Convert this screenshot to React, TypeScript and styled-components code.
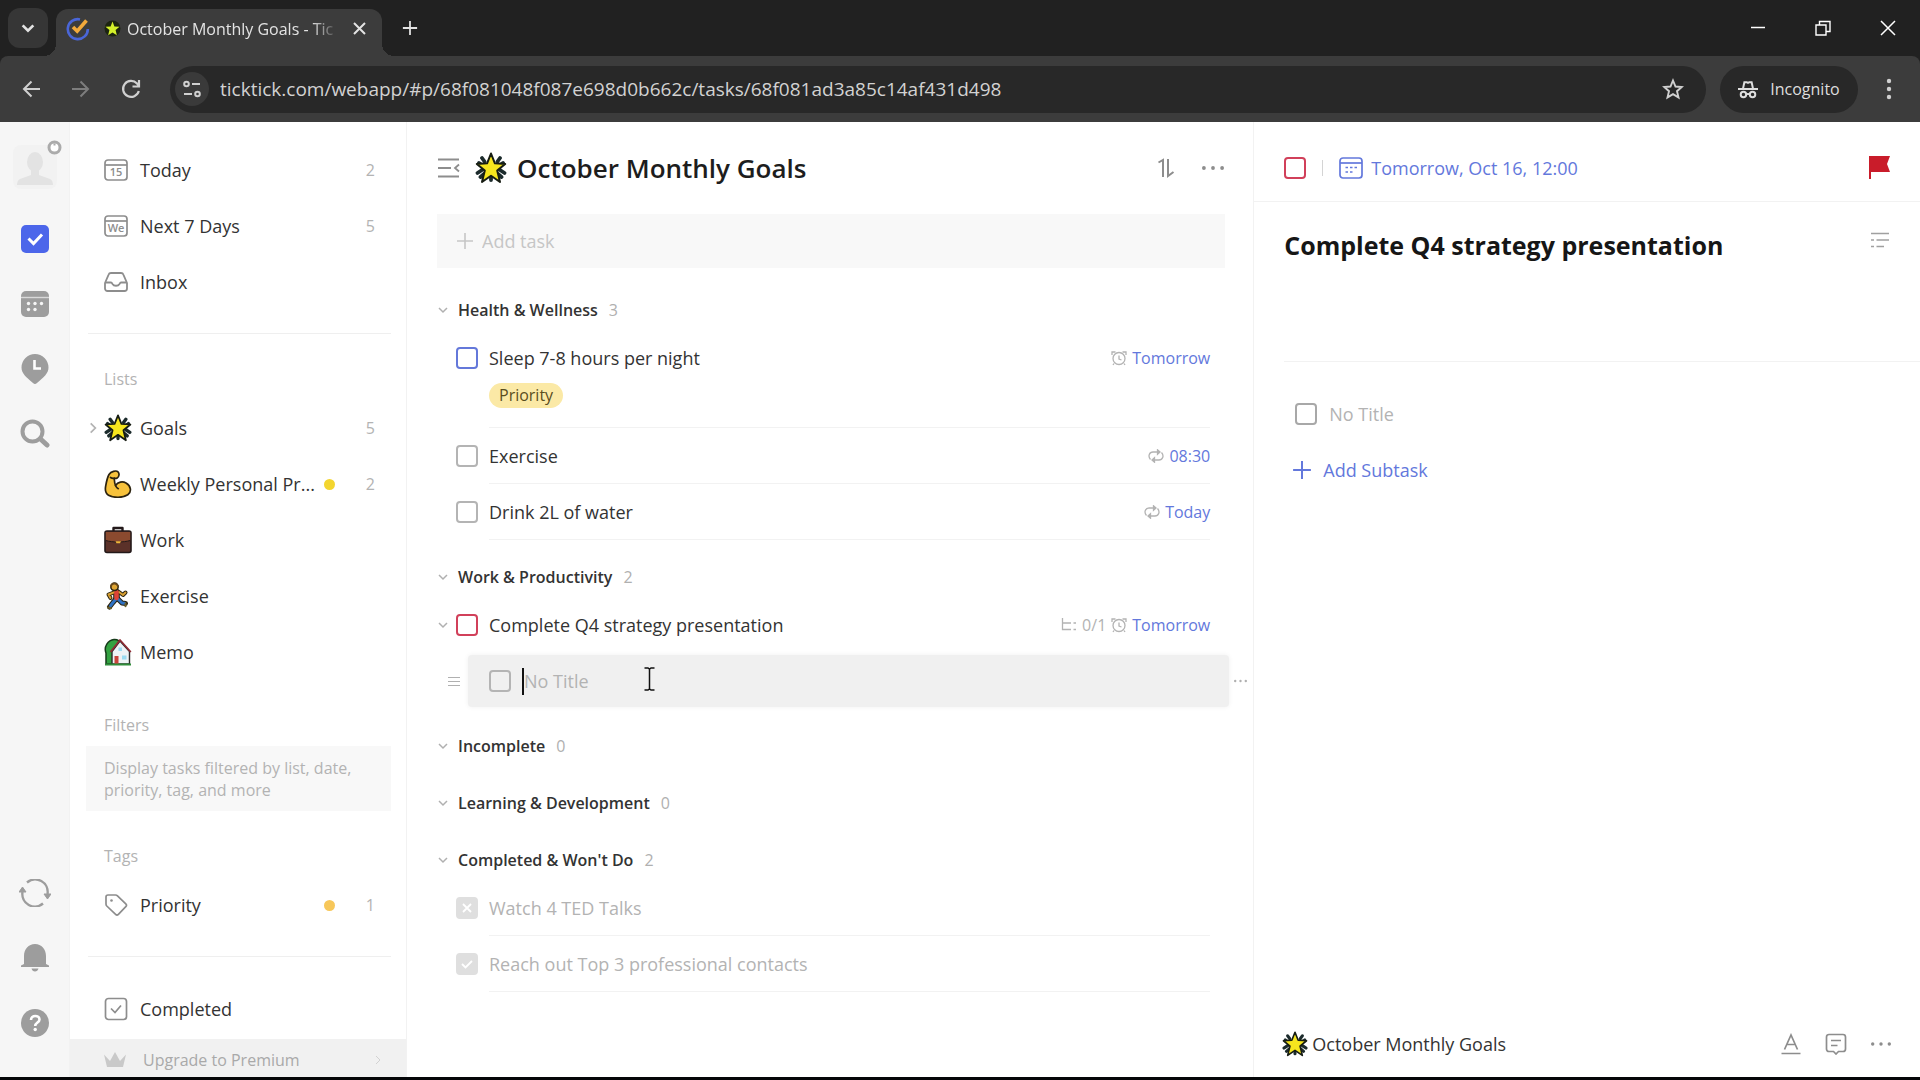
import React from "react";
import styled, { createGlobalStyle } from "styled-components";

const color = {
  text: "#333333",
  strong: "#1d1d1d",
  muted: "#b3b3b3",
  faint: "#c6c6c6",
  icon: "#8d8d8d",
  line: "#f2f2f2",
  blue: "#6378dc",
  red: "#d1405a",
  grey: "#9d9d9d",
};

const GlobalStyle = createGlobalStyle`
  *, *::before, *::after { box-sizing: border-box; }
  html, body { margin: 0; }
  body {
    font-family: "Segoe UI", "Open Sans", "Noto Sans", sans-serif;
    font-size: 18px;
    line-height: 28px;
    color: ${color.text};
    background: #fff;
  }
  h1, h2, h3, p, ul { margin: 0; padding: 0; font-weight: 400; font-size: inherit; }
  ul { list-style: none; }
  button, input { font: inherit; color: inherit; border: 0; padding: 0; margin: 0; background: none; }
  input:focus { outline: none; }
  a { color: inherit; text-decoration: none; }
  svg { display: block; flex: none; }
`;

/* ---------- shell ---------- */

const Shell = styled.div`
  display: flex;
  flex-direction: column;
  height: 100vh;
  overflow: hidden;
  border-bottom: 3px solid #050608;
`;

const Button = styled.button`
  display: flex;
  align-items: center;
  justify-content: center;
  flex: none;
`;

/* ---------- browser ---------- */

const TabStrip = styled.div`
  display: flex;
  flex: none;
  height: 56px;
  padding-left: 8px;
  background: #212121;
  color: #e3e3e3;
`;

const TabSearch = styled(Button)`
  width: 40px;
  height: 40px;
  margin-top: 8px;
  border-radius: 12px;
  background: #363636;
`;

const Tab = styled.div`
  display: flex;
  align-items: center;
  position: relative;
  width: 326px;
  margin: 9px 0 0 8px;
  padding: 0 15px 8px 10px;
  border-radius: 12px 12px 0 0;
  background: #3c3c3c;
  &::before, &::after {
    content: "";
    position: absolute;
    bottom: 0;
    width: 12px;
    height: 12px;
  }
  &::before { left: -12px; background: radial-gradient(circle at 0 0, transparent 12px, #3c3c3c 12px); }
  &::after { right: -12px; background: radial-gradient(circle at 100% 0, transparent 12px, #3c3c3c 12px); }
`;

const TabTitle = styled.span`
  flex: 1;
  margin-left: 6px;
  white-space: nowrap;
  font-size: 16px;
  mask-image: linear-gradient(to right, #000 184px, transparent 212px);
`;

const TabStar = styled.span`
  margin-left: 14px;
`;

const NewTab = styled(Button)`
  width: 32px;
  height: 40px;
  margin: 8px auto 0 12px;
`;

const WindowButton = styled(Button)`
  width: 65px;
  height: 56px;
`;

const ToolbarFrame = styled.div`
  flex: none;
  background: #212121;
`;

const Toolbar = styled.div`
  display: flex;
  align-items: center;
  height: 66px;
  padding: 0 20px 0 6px;
  border-radius: 8px 8px 0 0;
  background: #3c3c3c;
  color: #d0d0d0;
`;

const NavButton = styled(Button)<{ $dim?: boolean }>`
  width: 50px;
  height: 46px;
  color: ${(p) => (p.$dim ? "#7d7d7d" : "#d0d0d0")};
`;

const AddressBar = styled.div`
  display: flex;
  align-items: center;
  flex: 1;
  height: 47px;
  margin-left: 14px;
  padding: 0 22px 0 5px;
  border-radius: 24px;
  background: #282828;
`;

const SiteButton = styled(Button)`
  width: 34px;
  height: 34px;
  border-radius: 50%;
  background: #3a3a3a;
`;

const Address = styled.input`
  flex: 1;
  min-width: 0;
  margin-left: 11px;
  font-size: 19px;
  color: #d2d2d2;
`;

const Incognito = styled(Button)`
  gap: 12px;
  width: 138px;
  height: 47px;
  margin: 0 8px 0 14px;
  border-radius: 24px;
  background: #282828;
  font-size: 16px;
  color: #dedede;
`;

/* ---------- app frame ---------- */

const Workspace = styled.div`
  display: grid;
  grid-template-columns: 70px 337px minmax(0, 56fr) minmax(0, 44fr);
  flex: 1;
  min-height: 0;
`;

const Rail = styled.nav`
  display: flex;
  flex-direction: column;
  align-items: center;
  padding: 23px 0 22px;
  background: #f6f6f6;
  border-right: 1px solid ${color.line};
  color: ${color.grey};
`;

const Avatar = styled(Button)`
  position: relative;
  width: 44px;
  height: 44px;
  margin-bottom: 17px;
  border-radius: 8px;
  background: #f2f2f2;
`;

const Badge = styled.span`
  position: absolute;
  top: -5px;
  right: -5px;
`;

const RailButton = styled(Button)`
  width: 56px;
  height: 65px;
`;

const Spacer = styled.div`
  flex: 1;
`;

/* ---------- sidebar ---------- */

const Sidebar = styled.aside`
  display: flex;
  flex-direction: column;
  min-height: 0;
  padding-top: 20px;
  border-right: 1px solid ${color.line};
`;

const NavRow = styled.a`
  display: flex;
  align-items: center;
  flex: none;
  height: 56px;
  padding: 0 31px 0 16px;
`;

const Expander = styled.span`
  width: 18px;
  color: ${color.muted};
`;

const NavIcon = styled.span`
  display: flex;
  align-items: center;
  width: 26px;
  margin-right: 10px;
  color: ${color.icon};
`;

const NavName = styled.span`
  flex: 1;
  min-width: 0;
  white-space: nowrap;
`;

const Dot = styled.span<{ $fill: string }>`
  width: 11px;
  height: 11px;
  border-radius: 50%;
  background: ${(p) => p.$fill};
`;

const Count = styled.span`
  width: 40px;
  text-align: right;
  font-size: 16px;
  color: ${color.muted};
`;

const Rule = styled.hr`
  flex: none;
  height: 1px;
  margin: 23px 15px 0 18px;
  border: 0;
  background: #efefef;
`;

const Footing = styled.div`
  padding-top: 24px;
`;

const GroupLabel = styled.h2`
  padding: 25px 0 1px 34px;
  font-size: 16px;
  line-height: 40px;
  color: ${color.muted};
`;

const FilterHint = styled.p`
  margin: 0 15px 0 16px;
  padding: 11px 18px 10px;
  background: #f8f8f8;
  font-size: 16px;
  line-height: 22px;
  color: ${color.muted};
`;

const Upgrade = styled.button`
  display: flex;
  align-items: center;
  height: 38px;
  margin-top: auto;
  padding: 4px 22px 0 34px;
  background: #f1f1f1;
  font-size: 16px;
  color: #a9a9a9;
  text-align: left;
  & > span { flex: 1; margin-left: 17px; }
  & > svg:last-child { color: #d2d2d2; }
`;

/* ---------- task list ---------- */

const Main = styled.main`
  min-width: 0;
  padding: 0 28px 0 30px;
  border-right: 1px solid ${color.line};
`;

const ListHeader = styled.header`
  display: flex;
  align-items: center;
  height: 92px;
  color: ${color.icon};
`;

const ListTitle = styled.h1`
  flex: 1;
  margin-left: 10px;
  font-size: 26px;
  line-height: 36px;
  font-weight: 600;
  color: ${color.strong};
`;

const TitleStar = styled.span`
  margin-left: 15px;
`;

const HeaderButton = styled(Button)`
  width: 24px;
  height: 32px;
  margin-left: 23px;
`;

const AddTask = styled.label`
  display: flex;
  align-items: center;
  gap: 8px;
  height: 54px;
  margin-bottom: 22px;
  padding: 0 19px;
  background: #f8f8f8;
  color: ${color.faint};
  input { flex: 1; }
  input::placeholder { color: ${color.faint}; opacity: 1; }
`;

const Section = styled.section`
  margin-bottom: 17px;
`;

const SectionHead = styled.button`
  display: flex;
  align-items: center;
  height: 40px;
  color: #b0b0b0;
`;

const SectionName = styled.span`
  margin: 0 11px 0 9px;
  font-size: 16px;
  font-weight: 600;
  color: ${color.text};
`;

const SectionCount = styled.span`
  font-size: 16px;
`;

const TaskItem = styled.li`
  display: flex;
  padding-right: 15px;
`;

const TaskToggle = styled.span`
  width: 19px;
  padding: 22px 0 0;
  color: #b0b0b0;
`;

const TaskBody = styled.div<{ $line: boolean }>`
  flex: 1;
  min-width: 0;
  margin-left: 11px;
  padding: 14px 0 13px;
  border-bottom: 1px solid ${(p) => (p.$line ? color.line : "transparent")};
`;

const TaskLine = styled.div`
  display: flex;
  align-items: center;
`;

const TaskName = styled.label<{ $done?: boolean }>`
  flex: 1;
  color: ${(p) => (p.$done ? color.muted : color.text)};
`;

const Meta = styled.span`
  display: flex;
  align-items: center;
  gap: 5px;
  font-size: 16px;
  color: ${color.muted};
`;

const DateButton = styled.button`
  color: ${color.blue};
`;

const Tag = styled.span`
  display: inline-block;
  margin: 11px 0 6px;
  padding: 0 10px;
  border-radius: 13px;
  background: #fbe9a6;
  font-size: 16px;
  line-height: 25px;
  vertical-align: top;
  color: #5a4d1e;
`;

const BoxWrap = styled.span`
  display: grid;
  place-items: center;
  flex: none;
  width: 22px;
  height: 22px;
  & > * { grid-area: 1 / 1; }
  & > svg { pointer-events: none; }
`;

const TaskBox = styled(BoxWrap)`
  margin-top: 17px;
`;

const BoxInput = styled.input<{ $tone: string; $filled?: boolean }>`
  appearance: none;
  width: 22px;
  height: 22px;
  border: 2px solid ${(p) => p.$tone};
  border-radius: 4px;
  background: ${(p) => (p.$filled ? p.$tone : "transparent")};
`;

const SubtaskRow = styled.li`
  display: flex;
  align-items: center;
  height: 56px;
  margin-right: -22px;
  padding-left: 11px;
  color: #b0b0b0;
`;

const SubtaskBox = styled.div`
  display: flex;
  align-items: center;
  position: relative;
  flex: 1;
  height: 52px;
  margin: 0 5px 0 8px;
  padding: 0 21px;
  border-radius: 4px;
  background: #f0f0f0;
  box-shadow: 0 0 5px #f0f0f0;
`;

const Caret = styled.span`
  width: 2px;
  height: 27px;
  margin-left: 11px;
  background: #111;
`;

const TitleInput = styled.input`
  flex: 1;
  min-width: 0;
  &::placeholder { color: ${color.muted}; opacity: 1; }
`;

const Pointer = styled.span`
  position: absolute;
  left: 176px;
  top: 12px;
`;

/* ---------- detail ---------- */

const Detail = styled.section`
  display: flex;
  flex-direction: column;
  min-width: 0;
`;

const DetailHead = styled.header`
  display: flex;
  align-items: center;
  height: 80px;
  padding: 12px 29px 0 30px;
  border-bottom: 1px solid ${color.line};
  color: ${color.blue};
`;

const Separator = styled.span`
  width: 1px;
  height: 16px;
  margin: 0 16px 0 16px;
  background: #d4d4d4;
`;

const DueButton = styled.button`
  display: flex;
  align-items: center;
  gap: 8px;
  margin-right: auto;
`;

const DetailTitle = styled.div`
  display: flex;
  align-items: flex-start;
  justify-content: space-between;
  padding: 24px 30px 0;
  color: #a0a0a0;
  h2 {
    font-size: 25px;
    line-height: 38px;
    font-weight: 700;
    color: #161616;
  }
`;

const OutlineButton = styled(Button)`
  height: 28px;
`;

const DetailRule = styled.hr`
  flex: none;
  align-self: stretch;
  height: 1px;
  margin: 97px 0 0 30px;
  border: 0;
  background: ${color.line};
`;

const Subtasks = styled.div`
  flex: 1;
  padding: 24px 30px 0 38px;
`;

const DetailSubtask = styled.div`
  display: flex;
  align-items: center;
  gap: 12px;
  height: 56px;
  padding-left: 3px;
`;

const AddSubtask = styled.button`
  display: flex;
  align-items: center;
  gap: 11px;
  height: 56px;
  color: ${color.blue};
`;

const DetailFoot = styled.footer`
  display: flex;
  align-items: center;
  height: 67px;
  padding: 0 27px 0 28px;
  color: ${color.icon};
`;

const ListLink = styled.a`
  display: flex;
  align-items: center;
  gap: 4px;
  margin-right: auto;
  color: ${color.text};
`;

const FootButton = styled(Button)`
  width: 24px;
  height: 32px;
  margin-left: 21px;
`;

/* ---------- drawings ---------- */

const Chevron = ({ size = 12, turn = 0, width = 1.5 }: { size?: number; turn?: number; width?: number }) => (
  <svg width={size} height={size} viewBox="0 0 12 12" fill="none" stroke="currentColor" strokeWidth={width} transform={`rotate(${turn})`}>
    <path d="M2 4l4 4 4-4" />
  </svg>
);

const Plus = ({ size = 18, width = 1.6 }: { size?: number; width?: number }) => (
  <svg width={size} height={size} viewBox="0 0 18 18" fill="none" stroke="currentColor" strokeWidth={width}>
    <path d="M9 1v16M1 9h16" />
  </svg>
);

const Dots = ({ width = 22, r = 1.9 }: { width?: number; r?: number }) => (
  <svg width={width} height="6" viewBox={`0 0 ${width} 6`} fill="currentColor">
    <circle cx={r} cy="3" r={r} />
    <circle cx={width / 2} cy="3" r={r} />
    <circle cx={width - r} cy="3" r={r} />
  </svg>
);

const Star = ({ size = 28 }: { size?: number }) => (
  <svg width={size} height={size} viewBox="0 0 32 32">
    <g stroke="#1c2b2c" strokeWidth="3.8" strokeLinecap="round">
      <path d="M9.500 9.500L7 6M22.500 9.500L25 6M7 18L2.500 21M25 18L29.500 21M4 11L8 14M28 11l-4 3M16 24v4M5.500 25L9 22M26.500 25L23 22" />
    </g>
    <path
      d="M16 1.500l3.900 9.800 10.300.7-8 6.600 2.800 11.400L16 23.800 7 30l2.800-11.400-8-6.600 10.300-.7z"
      fill="#f6e61e"
      stroke="#161c12"
      strokeWidth="2"
      strokeLinejoin="round"
    />
  </svg>
);

const TabStarIcon = () => (
  <svg width="17" height="17" viewBox="0 0 16 16">
    <circle cx="8" cy="8" r="7.500" fill="#1c2410" />
    <path d="M8 1.500l1.800 4.600 4.800.3-3.700 3.100 1.200 4.800L8 11.700l-4.100 2.600 1.200-4.800-3.700-3.100 4.800-.3z" fill="#d3f02a" />
  </svg>
);

const Muscle = () => (
  <svg width="28" height="28" viewBox="0 0 28 28" fill="#f7c23c" stroke="#2c2310" strokeWidth="1.700" strokeLinejoin="round">
    <path d="M5 4.500C7 1.500 12 0 14 1.800c1.600 1.500 1.300 5-.8 6.200-1.200.7-2.400.4-3 .2.200 2.800.3 5 1.300 7.300 2.500-3.600 7-4.500 10.500-2.500 5.200 3 5.800 9 1.800 11.800-5.300 3.600-14.800 3-19.300.4C.8 23 1 20 1.600 16.500 2.300 12.500 3 8 5 4.500z" />
    <path d="M11.500 15.500c.6 1.500 1.500 2.500 2.800 3.200M6.500 7.500c1.300.8 2.600 1 3.700.7" fill="none" strokeLinecap="round" />
  </svg>
);

const Briefcase = () => (
  <svg width="28" height="28" viewBox="0 0 28 28" stroke="#23191a" strokeWidth="1.600" strokeLinejoin="round">
    <path d="M9.500 5V2h9v3" fill="none" strokeWidth="2.400" />
    <rect x="1" y="5" width="26" height="21.500" rx="2" fill="#5b3129" />
    <path d="M1.800 6h24.400v8.500c-7 2-17.400 2-24.400 0z" fill="#8b4a2f" stroke="none" />
    <path d="M1.800 14.500c7 2 17.400 2 24.400 0" fill="none" strokeWidth="1" />
    <path d="M11.500 15.300h5.500l-1 2h-3.500z" fill="#f0b73a" stroke="none" />
  </svg>
);

const Runner = () => (
  <svg width="26" height="28" viewBox="0 0 26 28" strokeLinecap="round" strokeLinejoin="round" fill="none">
    <g stroke="#2a2412">
      <path d="M11 10L4.500 12.500l2 3.500M15 10l4 3 2.500-2.500" strokeWidth="4" />
      <path d="M12 17l-3 3.500-3.500 4.500M14 17l4 4 3.500.5" strokeWidth="5" />
      <path d="M12.500 10v6.500" strokeWidth="6.600" />
    </g>
    <path d="M11 10L4.500 12.500l2 3.500M15 10l4 3 2.500-2.500" stroke="#d9a032" strokeWidth="2" />
    <path d="M12 17l-3 3.500-2.500 3.300M14 17l4 4 2.500.3" stroke="#2e72c4" strokeWidth="3" />
    <path d="M4 25.500l3 .7M21.500 21.500v2.800" stroke="#6b5f2c" strokeWidth="2" />
    <path d="M12.500 10v6" stroke="#dc4238" strokeWidth="4.600" />
    <circle cx="10.500" cy="4.800" r="3.700" fill="#e0a634" stroke="#2a2412" strokeWidth="1.500" />
    <path d="M7 4.500C7 1.500 12 0 14 4" stroke="#6b4a1c" strokeWidth="1.800" />
  </svg>
);

const House = () => (
  <svg width="28" height="28" viewBox="0 0 28 28" strokeLinejoin="round">
    <path d="M2 26V15C-.5 9 4 2 10 1.500c3.500-.3 6 2 7 4.500L8 26z" fill="#33a241" stroke="#163a1a" strokeWidth="1.500" />
    <path d="M8 13.500l8-10.500 9.500 10.500V26H8z" fill="#edf3f6" stroke="#2b2b2b" strokeWidth="1.400" />
    <path d="M6.500 14L16 2l10.800 12" fill="none" stroke="#8f2c34" strokeWidth="1.800" />
    <rect x="10.500" y="18" width="4" height="8" fill="#c9443c" />
    <path d="M18 17.500h4.500v4H18zM14.500 9.500h3.500v3.500h-3.500z" fill="#9bdcf2" />
    <path d="M1 26.500h26" stroke="#2f8d3a" strokeWidth="2" />
  </svg>
);

const CalendarGlyph = ({ children }: { children: React.ReactNode }) => (
  <svg width="24" height="24" viewBox="0 0 24 24" fill="none" stroke="currentColor" strokeWidth="1.700">
    <rect x="1" y="2" width="22" height="20" rx="3" />
    <path d="M1 7h22" />
    {children}
  </svg>
);

const DayText = styled.text`
  font-size: 11px;
  font-weight: 600;
  fill: currentColor;
  stroke: none;
  text-anchor: middle;
`;

const Inbox = () => (
  <svg width="24" height="24" viewBox="1 0 24 24" fill="none" stroke="currentColor" strokeWidth="1.800" strokeLinejoin="round">
    <path d="M2 13L5.500 4.800C6 3.500 7 3 8 3h10c1 0 2 .5 2.500 1.800L24 13v5.500c0 1.500-1 2.500-2.500 2.500h-17C3 21 2 20 2 18.500z" />
    <path d="M2 12.500h6c.8 0 1 .5 1.500 1.500 1.300 2.300 5.700 2.300 7 0 .5-1 .7-1.500 1.500-1.500h6" />
  </svg>
);

const TagGlyph = () => (
  <svg width="24" height="24" viewBox="0 0 24 24" fill="none" stroke="currentColor" strokeWidth="1.700" strokeLinejoin="round">
    <path d="M2 4c0-1.200.8-2 2-2h7.500c.8 0 1.500.3 2 .8l8.300 8c.8.8.8 2 0 2.800l-7.400 7.700c-.8.8-2 .8-2.800 0L2.800 13c-.5-.5-.8-1.200-.8-2z" />
    <circle cx="7.500" cy="7.500" r="1.300" fill="currentColor" stroke="none" />
  </svg>
);

const CheckSquare = () => (
  <svg width="24" height="24" viewBox="0 0 24 24" fill="none" stroke="currentColor" strokeWidth="1.700">
    <rect x="1.500" y="1.500" width="21" height="21" rx="3" />
    <path d="M7 11.500l4 4 6-7" />
  </svg>
);

const AlarmGlyph = () => (
  <svg width="16" height="15" viewBox="0 0 16 15" fill="none" stroke="currentColor" strokeWidth="1.300">
    <path d="M1 4V1h3.500M11.500 1H15v3M3 12.500L2 14M13 12.500l1 1.500" />
    <circle cx="8" cy="7.500" r="6" />
    <path d="M8 4.500V8l2.500 1" />
  </svg>
);

const RepeatGlyph = () => (
  <svg width="16" height="14" viewBox="0 0 16 14" fill="none" stroke="currentColor" strokeWidth="1.300">
    <path d="M2.500 10.500C-.5 7 1.500 3 5 3h6.500M9.500 .8v4.400L12 3zM13.500 3.500c3 3.500 1 7.500-2.500 7.500H4.500M6.500 8.800v4.400L4 11z" />
  </svg>
);

const SubtaskGlyph = () => (
  <svg width="16" height="14" viewBox="0 0 16 14" fill="none" stroke="currentColor" strokeWidth="1.300">
    <path d="M1.500 0v11.500H10M1.500 5H10M12.500 5H15M12.500 11.500H15" />
  </svg>
);

/* ---------- data ---------- */

type NavEntry = { name: string; icon: React.ReactNode; count?: number; dot?: string; expandable?: boolean };

const smartLists: NavEntry[] = [
  { name: "Today", count: 2, icon: <CalendarGlyph><DayText x="12" y="18">15</DayText></CalendarGlyph> },
  { name: "Next 7 Days", count: 5, icon: <CalendarGlyph><DayText x="12" y="18">We</DayText></CalendarGlyph> },
  { name: "Inbox", icon: <Inbox /> },
];

const lists: NavEntry[] = [
  { name: "Goals", count: 5, icon: <Star />, expandable: true },
  { name: "Weekly Personal Pr...", count: 2, dot: "#f3d52f", icon: <Muscle /> },
  { name: "Work", icon: <Briefcase /> },
  { name: "Exercise", icon: <Runner /> },
  { name: "Memo", icon: <House /> },
];

const NavLine = ({ entry }: { entry: NavEntry }) => (
  <NavRow href="#">
    <Expander>{entry.expandable && <Chevron size={14} turn={-90} />}</Expander>
    <NavIcon>{entry.icon}</NavIcon>
    <NavName>{entry.name}</NavName>
    {entry.dot && <Dot $fill={entry.dot} />}
    <Count>{entry.count}</Count>
  </NavRow>
);

type TaskProps = {
  id: string;
  name: string;
  tone?: string;
  state?: "open" | "done" | "wont";
  open?: boolean;
  line?: boolean;
  tag?: string;
  meta?: React.ReactNode;
  date?: string;
};

const Task = ({ id, name, tone = "#b4b4b4", state = "open", open, line = true, tag, meta, date }: TaskProps) => (
  <TaskItem>
    <TaskToggle>{open && <Chevron />}</TaskToggle>
    <TaskBox>
      <BoxInput
        id={id}
        type="checkbox"
        defaultChecked={state !== "open"}
        $tone={state === "open" ? tone : "#dfdfdf"}
        $filled={state !== "open"}
      />
      {state !== "open" && (
        <svg width="14" height="14" viewBox="0 0 14 14" fill="none" stroke="#fff" strokeWidth="1.800">
          <path d={state === "done" ? "M2 7l3.500 3.500L12 4" : "M3 3l8 8M11 3l-8 8"} />
        </svg>
      )}
    </TaskBox>
    <TaskBody $line={line}>
      <TaskLine>
        <TaskName htmlFor={id} $done={state !== "open"}>{name}</TaskName>
        {date && (
          <Meta>
            {meta}
            <DateButton>{date}</DateButton>
          </Meta>
        )}
      </TaskLine>
      {tag && <Tag>{tag}</Tag>}
    </TaskBody>
  </TaskItem>
);

const Group = ({ name, count, children }: { name: string; count: number; children?: React.ReactNode }) => (
  <Section>
    <SectionHead>
      <Chevron />
      <SectionName>{name}</SectionName>
      <SectionCount>{count}</SectionCount>
    </SectionHead>
    {children && <ul>{children}</ul>}
  </Section>
);

/* ---------- page ---------- */

const Browser = () => (
  <>
    <TabStrip>
      <TabSearch aria-label="Search tabs"><Chevron size={16} width={2} /></TabSearch>
      <Tab>
        <svg width="24" height="24" viewBox="0 0 24 24" fill="none">
          <path d="M14 2.400A10 10 0 1 0 21.800 12" stroke="#4a66d8" strokeWidth="2.600" />
          <path d="M7 10l4.200 4.200L20.500 3.500" stroke="#f2a93b" strokeWidth="3.600" />
        </svg>
        <TabStar><TabStarIcon /></TabStar>
        <TabTitle>October Monthly Goals - Tic</TabTitle>
        <Button aria-label="Close tab">
          <svg width="15" height="15" viewBox="0 0 15 15" stroke="currentColor" strokeWidth="2"><path d="M2 2l11 11M13 2L2 13" /></svg>
        </Button>
      </Tab>
      <NewTab aria-label="New tab"><Plus size={16} width={2} /></NewTab>
      <WindowButton aria-label="Minimize">
        <svg width="16" height="16" viewBox="0 0 16 16" stroke="#fff" strokeWidth="1.500"><path d="M1 7.500h14" /></svg>
      </WindowButton>
      <WindowButton aria-label="Restore">
        <svg width="16" height="16" viewBox="0 0 16 16" fill="none" stroke="#fff" strokeWidth="1.400"><path d="M1 5h10v10H1zM4.500 5V1.500H15v10h-4" /></svg>
      </WindowButton>
      <WindowButton aria-label="Close">
        <svg width="16" height="16" viewBox="0 0 16 16" stroke="#fff" strokeWidth="1.500"><path d="M1 1l14 14M15 1L1 15" /></svg>
      </WindowButton>
    </TabStrip>
    <ToolbarFrame>
      <Toolbar>
        <NavButton aria-label="Back">
          <svg width="18" height="18" viewBox="0 0 18 18" fill="none" stroke="currentColor" strokeWidth="2"><path d="M18 9H2M9.500 1.500L2 9l7.500 7.500" /></svg>
        </NavButton>
        <NavButton aria-label="Forward" $dim>
          <svg width="18" height="18" viewBox="0 0 18 18" fill="none" stroke="currentColor" strokeWidth="2"><path d="M0 9h16M8.500 1.500L16 9l-7.500 7.500" /></svg>
        </NavButton>
        <NavButton aria-label="Reload">
          <svg width="20" height="20" viewBox="0 0 20 20" fill="none" stroke="currentColor" strokeWidth="2.200"><path d="M17.800 12A8 8 0 1 1 16 4.500l1.500 1.800M18 1v6.500h-6.500" /></svg>
        </NavButton>
        <AddressBar>
          <SiteButton aria-label="Site information">
            <svg width="18" height="18" viewBox="0 0 18 18" fill="none" stroke="currentColor" strokeWidth="2">
              <circle cx="3.500" cy="4" r="2.300" /><path d="M9 4h8M1 14h8" /><circle cx="14.500" cy="14" r="2.300" />
            </svg>
          </SiteButton>
          <Address aria-label="Address" defaultValue="ticktick.com/webapp/#p/68f081048f087e698d0b662c/tasks/68f081ad3a85c14af431d498" />
          <Button aria-label="Bookmark">
            <svg width="22" height="22" viewBox="0 0 22 22" fill="none" stroke="currentColor" strokeWidth="1.900">
              <path d="M11 2.500l2.500 6 6.300.5-4.800 4.200 1.500 6.200-5.500-3.300-5.500 3.300L7 13.200 2.200 9l6.300-.5z" />
            </svg>
          </Button>
        </AddressBar>
        <Incognito>
          <svg width="20" height="19" viewBox="0 0 22 20" fill="none" stroke="currentColor" strokeWidth="2.200">
            <path d="M0 9.500h22M5.500 9L7 2h2.500l1.500.8 1.500-.8H15l1.500 7" />
            <circle cx="6" cy="15.500" r="3" /><circle cx="16" cy="15.500" r="3" /><path d="M9 15h4" />
          </svg>
          Incognito
        </Incognito>
        <Button aria-label="Menu">
          <svg width="34" height="22" viewBox="0 0 34 22" fill="currentColor">
            <circle cx="23" cy="3" r="2.200" /><circle cx="23" cy="11" r="2.200" /><circle cx="23" cy="19" r="2.200" />
          </svg>
        </Button>
      </Toolbar>
    </ToolbarFrame>
  </>
);

const AppRail = () => (
  <Rail>
    <Avatar aria-label="Account">
      <svg width="40" height="40" viewBox="0 0 40 40" fill="#e3e3e3">
        <ellipse cx="20" cy="15" rx="8" ry="10" /><path d="M16 22h8v6l11 4c2 1 3 3 3 6H2c0-3 1-5 3-6l11-4z" />
      </svg>
      <Badge>
        <svg width="15" height="15" viewBox="0 0 15 15" fill="#fff" stroke="#ababab" strokeWidth="3">
          <circle cx="7.500" cy="7.500" r="5.500" /><path d="M7.500 3.500v2" strokeWidth="2" />
        </svg>
      </Badge>
    </Avatar>
    <RailButton aria-label="Tasks">
      <svg width="28" height="28" viewBox="0 0 28 28" fill="none"><rect width="28" height="28" rx="5" fill="#4c66ea" /><path d="M7.500 13.500l5 5 8.500-9" stroke="#fff" strokeWidth="3" /></svg>
    </RailButton>
    <RailButton aria-label="Calendar">
      <svg width="28" height="28" viewBox="0 0 28 28">
        <rect y="1" width="28" height="26" rx="5" fill="currentColor" />
        <path d="M0 7.500h28" stroke="#d9d9d9" strokeWidth="1.400" />
        <g fill="#f6f6f6"><circle cx="7.500" cy="13.500" r="1.700" /><circle cx="14" cy="13.500" r="1.700" /><circle cx="20.500" cy="13.500" r="1.700" /><circle cx="7.500" cy="19.500" r="1.700" /><circle cx="14" cy="19.500" r="1.700" /></g>
      </svg>
    </RailButton>
    <RailButton aria-label="Timer">
      <svg width="28" height="30" viewBox="0 0 28 30"><path d="M14 0a13.500 13.500 0 0 1 13.500 13.500c0 6-5 10-11.500 15.500-1.300 1.200-2.700 1.200-4 0C5.500 23.500.5 19.500.5 13.500A13.500 13.500 0 0 1 14 0z" fill="currentColor" /><path d="M13.500 6v8.500H20" fill="none" stroke="#fff" strokeWidth="2.600" /></svg>
    </RailButton>
    <RailButton aria-label="Search">
      <svg width="30" height="30" viewBox="0 0 30 30" fill="none" stroke="currentColor" strokeLinecap="round"><circle cx="12.500" cy="12.500" r="10" strokeWidth="4" /><path d="M20.500 20l6.500 6" strokeWidth="5" /></svg>
    </RailButton>
    <Spacer />
    <RailButton aria-label="Sync">
      <svg width="32" height="28" viewBox="0 0 32 28" fill="none" stroke="currentColor" strokeWidth="2.400">
        <path d="M8 3.500A12.500 12.500 0 0 1 28.500 15M24 24.500A12.500 12.500 0 0 1 3.500 13" />
        <path d="M25 15h7l-3.500 5zM0 13h7L3.500 8z" fill="currentColor" strokeWidth="1" />
      </svg>
    </RailButton>
    <RailButton aria-label="Notifications">
      <svg width="28" height="28" viewBox="0 0 28 28" fill="currentColor"><path d="M3 20V12C3 5 7.500 0 14 0s11 5 11 12v8l3 1.500V23H0v-1.500zM10.500 24.500h7c-.5 2-1.800 3-3.500 3s-3-1-3.500-3z" /></svg>
    </RailButton>
    <RailButton aria-label="Help">
      <svg width="28" height="28" viewBox="0 0 28 28" fill="none"><circle cx="14" cy="14" r="14" fill="currentColor" /><path d="M10 11c0-5.500 8.500-5 8.500-.5 0 3-4.300 3-4.300 6.500" stroke="#fff" strokeWidth="2.600" /><circle cx="14.200" cy="20.500" r="1.700" fill="#fff" /></svg>
    </RailButton>
  </Rail>
);

const ListSidebar = () => (
  <Sidebar>
    {smartLists.map((e) => <NavLine key={e.name} entry={e} />)}
    <Rule />
    <GroupLabel>Lists</GroupLabel>
    {lists.map((e) => <NavLine key={e.name} entry={e} />)}
    <GroupLabel>Filters</GroupLabel>
    <FilterHint>Display tasks filtered by list, date, priority, tag, and more</FilterHint>
    <GroupLabel>Tags</GroupLabel>
    <NavLine entry={{ name: "Priority", count: 1, dot: "#f7c75a", icon: <TagGlyph /> }} />
    <Rule />
    <Footing>
      <NavLine entry={{ name: "Completed", icon: <CheckSquare /> }} />
    </Footing>
    <Upgrade>
      <svg width="22" height="18" viewBox="0 0 22 18" fill="#c9c9c9"><path d="M0 3.500L6 10l5-9 5 9 6-6.500L19 16H3z" /></svg>
      <span>Upgrade to Premium</span>
      <Chevron turn={-90} width={1} />
    </Upgrade>
  </Sidebar>
);

const TaskList = () => (
  <Main>
    <ListHeader>
      <Button aria-label="Collapse sidebar">
        <svg width="23" height="20" viewBox="0 0 23 20" fill="none" stroke="currentColor" strokeWidth="1.800"><path d="M1 1.500h21M1 10h13M1 18.500h21M22 6.500L18 10l4 3.500" /></svg>
      </Button>
      <TitleStar><Star size={32} /></TitleStar>
      <ListTitle>October Monthly Goals</ListTitle>
      <HeaderButton aria-label="Sort">
        <svg width="18" height="20" viewBox="0 0 18 20" fill="none" stroke="currentColor" strokeWidth="2"><path d="M1.500 4.500L6 2v17M11 1v17l5.500-4" /></svg>
      </HeaderButton>
      <HeaderButton aria-label="More"><Dots /></HeaderButton>
    </ListHeader>
    <AddTask>
      <Plus />
      <input aria-label="Add task" placeholder="Add task" />
    </AddTask>
    <Group name="Health & Wellness" count={3}>
      <Task id="sleep" name="Sleep 7-8 hours per night" tone="#6478da" tag="Priority" meta={<AlarmGlyph />} date="Tomorrow" />
      <Task id="exercise" name="Exercise" meta={<RepeatGlyph />} date="08:30" />
      <Task id="water" name="Drink 2L of water" meta={<RepeatGlyph />} date="Today" />
    </Group>
    <Group name="Work & Productivity" count={2}>
      <Task
        id="strategy"
        name="Complete Q4 strategy presentation"
        tone={color.red}
        open
        line={false}
        meta={<><SubtaskGlyph />0/1<AlarmGlyph /></>}
        date="Tomorrow"
      />
      <SubtaskRow>
        <svg width="12" height="11" viewBox="0 0 12 11" stroke="currentColor" strokeWidth="1.200"><path d="M0 1.500h12M0 5.500h12M0 9.500h12" /></svg>
        <SubtaskBox>
          <BoxWrap><BoxInput type="checkbox" aria-label="Complete subtask" $tone="#b4b4b4" /></BoxWrap>
          <Caret />
          <TitleInput aria-label="Subtask title" placeholder="No Title" />
          <Pointer>
            <svg width="11" height="24" viewBox="0 0 11 24" fill="none" stroke="#111" strokeWidth="1.500"><path d="M.5 1H4l1.500 1L7 1h3.500M.5 23H4l1.500-1L7 23h3.500M5.500 2v20" /></svg>
          </Pointer>
        </SubtaskBox>
        <Button aria-label="More"><Dots width={13} r={1.2} /></Button>
      </SubtaskRow>
    </Group>
    <Group name="Incomplete" count={0} />
    <Group name="Learning & Development" count={0} />
    <Group name="Completed & Won't Do" count={2}>
      <Task id="ted" name="Watch 4 TED Talks" state="wont" />
      <Task id="contacts" name="Reach out Top 3 professional contacts" state="done" />
    </Group>
  </Main>
);

const TaskDetail = () => (
  <Detail>
    <DetailHead>
      <BoxWrap><BoxInput type="checkbox" aria-label="Complete task" $tone={color.red} /></BoxWrap>
      <Separator />
      <DueButton>
        <CalendarGlyph><path d="M6.500 11.500H9M11 11.500h2.500M15.500 11.500H18M6.500 16H9M11 16h2.500" /></CalendarGlyph>
        Tomorrow, Oct 16, 12:00
      </DueButton>
      <Button aria-label="Priority">
        <svg width="22" height="24" viewBox="0 0 22 24" fill="#c91c2a"><path d="M0 0h21l-3 8 3 8H2v7H0z" /></svg>
      </Button>
    </DetailHead>
    <DetailTitle>
      <h2>Complete Q4 strategy presentation</h2>
      <OutlineButton aria-label="Outline">
        <svg width="20" height="16" viewBox="0 0 20 16" fill="none" stroke="currentColor" strokeWidth="1.500"><path d="M1 1.500h18M1 8h3M6.500 8H19M1 14.500h3M6.500 14.500H14" /></svg>
      </OutlineButton>
    </DetailTitle>
    <DetailRule />
    <Subtasks>
      <DetailSubtask>
        <BoxWrap><BoxInput type="checkbox" aria-label="Complete subtask" $tone="#a8a8a8" /></BoxWrap>
        <TitleInput aria-label="Subtask title" placeholder="No Title" />
      </DetailSubtask>
      <AddSubtask><Plus size={20} width={1.8} />Add Subtask</AddSubtask>
    </Subtasks>
    <DetailFoot>
      <ListLink href="#"><Star size={26} />October Monthly Goals</ListLink>
      <FootButton aria-label="Text style">
        <svg width="20" height="22" viewBox="0 0 20 22" fill="none" stroke="currentColor" strokeWidth="1.700"><path d="M3.500 16.500L10 2l6.500 14.500M6 11.500h8M.5 20.500h19" /></svg>
      </FootButton>
      <FootButton aria-label="Comments">
        <svg width="22" height="22" viewBox="0 0 22 22" fill="none" stroke="currentColor" strokeWidth="1.700"><path d="M4 1.500h14c1.500 0 2.500 1 2.500 2.500v12c0 1.500-1 2.500-2.500 2.500h-4.500L11 21l-2.500-2.500H4c-1.500 0-2.500-1-2.500-2.500V4c0-1.500 1-2.500 2.500-2.500zM6 7.500h10M6 12.500h6.500" /></svg>
      </FootButton>
      <FootButton aria-label="More"><Dots width={20} r={1.7} /></FootButton>
    </DetailFoot>
  </Detail>
);

export default function App() {
  return (
    <Shell>
      <GlobalStyle />
      <Browser />
      <Workspace>
        <AppRail />
        <ListSidebar />
        <TaskList />
        <TaskDetail />
      </Workspace>
    </Shell>
  );
}
